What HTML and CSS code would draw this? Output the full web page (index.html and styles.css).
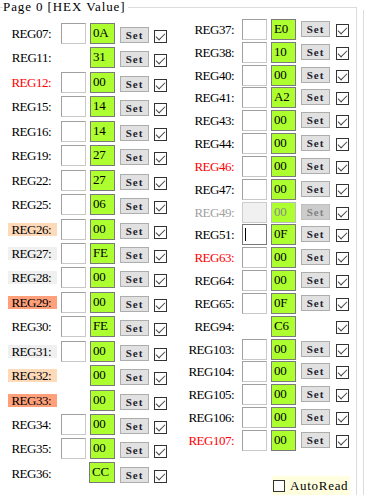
FILE: index.html
```html
<!DOCTYPE html>
<html>
<head>
<meta charset="utf-8">
<link rel="stylesheet" href="styles.css">
</head>
<body>
<div class="page">
  <fieldset class="group">
    <legend class="group-title">Page 0 [HEX Value]</legend>
    <div class="cols">
      <div class="col col-left">
        <div class="row"><span class="lbl">REG07:</span><span class="inp"></span><span class="hex">0A</span><span class="set">Set</span><span class="cb"></span></div>
        <div class="row"><span class="lbl">REG11:</span><span class="hex">31</span><span class="set">Set</span><span class="cb"></span></div>
        <div class="row"><span class="lbl red">REG12:</span><span class="inp"></span><span class="hex">00</span><span class="set">Set</span><span class="cb"></span></div>
        <div class="row"><span class="lbl">REG15:</span><span class="inp"></span><span class="hex">14</span><span class="set">Set</span><span class="cb"></span></div>
        <div class="row"><span class="lbl">REG16:</span><span class="inp"></span><span class="hex">14</span><span class="set">Set</span><span class="cb"></span></div>
        <div class="row"><span class="lbl">REG19:</span><span class="inp"></span><span class="hex">27</span><span class="set">Set</span><span class="cb"></span></div>
        <div class="row"><span class="lbl">REG22:</span><span class="inp"></span><span class="hex">27</span><span class="set">Set</span><span class="cb"></span></div>
        <div class="row"><span class="lbl">REG25:</span><span class="inp"></span><span class="hex">06</span><span class="set">Set</span><span class="cb"></span></div>
        <div class="row"><span class="lbl bg-peach">REG26:</span><span class="inp"></span><span class="hex">00</span><span class="set">Set</span><span class="cb"></span></div>
        <div class="row"><span class="lbl bg-gray">REG27:</span><span class="inp"></span><span class="hex">FE</span><span class="set">Set</span><span class="cb"></span></div>
        <div class="row"><span class="lbl bg-gray">REG28:</span><span class="inp"></span><span class="hex">00</span><span class="set">Set</span><span class="cb"></span></div>
        <div class="row"><span class="lbl bg-salmon">REG29:</span><span class="inp"></span><span class="hex">00</span><span class="set">Set</span><span class="cb"></span></div>
        <div class="row"><span class="lbl">REG30:</span><span class="inp"></span><span class="hex">FE</span><span class="set">Set</span><span class="cb"></span></div>
        <div class="row"><span class="lbl bg-gray">REG31:</span><span class="inp"></span><span class="hex">00</span><span class="set">Set</span><span class="cb"></span></div>
        <div class="row"><span class="lbl bg-peach">REG32:</span><span class="hex">00</span><span class="set">Set</span><span class="cb"></span></div>
        <div class="row"><span class="lbl bg-salmon">REG33:</span><span class="hex">00</span><span class="set">Set</span><span class="cb"></span></div>
        <div class="row"><span class="lbl">REG34:</span><span class="inp"></span><span class="hex">00</span><span class="set">Set</span><span class="cb"></span></div>
        <div class="row"><span class="lbl">REG35:</span><span class="inp"></span><span class="hex">00</span><span class="set">Set</span><span class="cb"></span></div>
        <div class="row row-last"><span class="lbl">REG36:</span><span class="hex hex-shift">CC</span><span class="set">Set</span><span class="cb"></span></div>
      </div>
      <div class="col col-right">
        <div class="row"><span class="lbl">REG37:</span><span class="inp"></span><span class="hex">E0</span><span class="set">Set</span><span class="cb"></span></div>
        <div class="row"><span class="lbl">REG38:</span><span class="inp"></span><span class="hex">10</span><span class="set">Set</span><span class="cb"></span></div>
        <div class="row"><span class="lbl">REG40:</span><span class="inp"></span><span class="hex">00</span><span class="set">Set</span><span class="cb"></span></div>
        <div class="row"><span class="lbl">REG41:</span><span class="inp"></span><span class="hex">A2</span><span class="set">Set</span><span class="cb"></span></div>
        <div class="row"><span class="lbl">REG43:</span><span class="inp"></span><span class="hex">00</span><span class="set">Set</span><span class="cb"></span></div>
        <div class="row"><span class="lbl">REG44:</span><span class="inp"></span><span class="hex">00</span><span class="set">Set</span><span class="cb"></span></div>
        <div class="row"><span class="lbl red">REG46:</span><span class="inp"></span><span class="hex">00</span><span class="set">Set</span><span class="cb"></span></div>
        <div class="row"><span class="lbl">REG47:</span><span class="inp"></span><span class="hex">00</span><span class="set">Set</span><span class="cb"></span></div>
        <div class="row disabled"><span class="lbl">REG49:</span><span class="inp"></span><span class="hex">00</span><span class="set">Set</span><span class="cb"></span></div>
        <div class="row"><span class="lbl">REG51:</span><span class="inp focused"><span class="caret"></span></span><span class="hex">0F</span><span class="set">Set</span><span class="cb"></span></div>
        <div class="row"><span class="lbl red">REG63:</span><span class="inp"></span><span class="hex">00</span><span class="set">Set</span><span class="cb"></span></div>
        <div class="row"><span class="lbl">REG64:</span><span class="inp"></span><span class="hex">00</span><span class="set">Set</span><span class="cb"></span></div>
        <div class="row"><span class="lbl">REG65:</span><span class="inp"></span><span class="hex">0F</span><span class="set">Set</span><span class="cb"></span></div>
        <div class="row"><span class="lbl">REG94:</span><span class="hex">C6</span><span class="cb"></span></div>
        <div class="row"><span class="lbl">REG103:</span><span class="inp"></span><span class="hex">00</span><span class="set">Set</span><span class="cb"></span></div>
        <div class="row"><span class="lbl">REG104:</span><span class="inp"></span><span class="hex">00</span><span class="set">Set</span><span class="cb"></span></div>
        <div class="row"><span class="lbl">REG105:</span><span class="inp"></span><span class="hex">00</span><span class="set">Set</span><span class="cb"></span></div>
        <div class="row"><span class="lbl">REG106:</span><span class="inp"></span><span class="hex">00</span><span class="set">Set</span><span class="cb"></span></div>
        <div class="row"><span class="lbl red">REG107:</span><span class="inp"></span><span class="hex">00</span><span class="set">Set</span><span class="cb"></span></div>
        <div class="autoread"><span class="cb-plain"></span><span class="autoread-text">AutoRead</span></div>
      </div>
    </div>
  </fieldset>
  <div class="side-panel"></div>
</div>
</body>
</html>
```

FILE: styles.css
```css
* { box-sizing: border-box; }
html, body { margin: 0; padding: 0; background: #ffffff; }
body {
  width: 367px;
  height: 495px;
  overflow: hidden;
  font-family: "Liberation Serif", "Times New Roman", serif;
  font-size: 13px;
  color: #000;
}
.page { display: flex; align-items: flex-start; height: 495px; overflow: hidden; }
.group {
  flex: none;
  margin: 0 0 0 -1px;
  padding: 0;
  width: 358px;
  height: 496px;
  min-width: 0;
  overflow: hidden;
  border: 1px solid #dcdcdc;
  border-bottom: none;
}
.group-title {
  margin-left: 3px;
  padding: 0 3px 0 0;
  font-size: 13px;
  line-height: 14px;
  letter-spacing: 0.9px;
  color: #000;
}
.side-panel {
  flex: none;
  margin-left: 6px;
  margin-top: 10px;
  width: 4px;
  height: 485px;
  border-left: 1px solid #dcdcdc;
}
.cols { display: flex; align-items: flex-start; }
.col { display: flex; flex-direction: column; }
.col-left { margin-left: 8px; padding-top: 9px; }
.col-right { margin-left: 18px; padding-top: 5px; }
.row { display: grid; align-items: start; }
.col-left .row {
  height: 24.44px;
  grid-template-columns: 49px 4px 25px 4px 25px 5px 29px 5px 13px;
}
.col-left .row-last { height: 21px; }
.col-right .row {
  height: 22.83px;
  grid-template-columns: 49px 8px 25px 4px 25px 5px 29px 6px 13px;
}
.lbl {
  grid-column: 1;
  grid-row: 1;
  height: 13px;
  margin-top: 4px;
  line-height: 13px;
  text-align: right;
  white-space: nowrap;
  letter-spacing: -0.5px;
}
.col-left .lbl { padding-right: 6px; }
.col-right .lbl { padding-right: 0; }
.red { color: #ff0000; }
.bg-peach { background: #ffdab9; }
.bg-gray { background: #f0f0f0; }
.bg-salmon { background: #ffa07a; }
.inp {
  grid-column: 3;
  grid-row: 1;
  height: 21px;
  background: #fff;
  border: 1px solid #a0a0a0;
  border-bottom-color: #c8c8c8;
  border-right-color: #c8c8c8;
}
.inp.focused { border-color: #7a7a7a; padding: 3px 0 0 2px; }
.caret { display: block; width: 1px; height: 13px; background: #000; }
.hex {
  grid-column: 5;
  grid-row: 1;
  height: 21px;
  background: #adff2f;
  border: 1px solid #7a7a7a;
  padding: 1px 0 0 2px;
  line-height: 16px;
  letter-spacing: -0.2px;
}
.hex-shift { margin-left: -1px; margin-top: -1px; }
.set {
  grid-column: 7;
  grid-row: 1;
  height: 16px;
  background: #e1e1e1;
  border: 1px solid #adadad;
  font-family: "Liberation Serif", serif;
  font-weight: bold;
  font-size: 11px;
  letter-spacing: 1px;
  line-height: 14px;
  text-align: center;
  color: #1e1e2e;
}
.col-left .set { margin-top: 4px; }
.col-right .set { margin-top: 2px; }
.cb {
  grid-column: 9;
  grid-row: 1;
  position: relative;
  width: 13px;
  height: 13px;
  background: #fff;
  border: 1px solid #333;
}
.col-left .cb { margin-top: 7px; }
.col-right .cb { margin-top: 5px; }
.cb::after {
  content: "";
  position: absolute;
  left: 3px;
  top: 0px;
  width: 4px;
  height: 8px;
  border-right: 1px solid #444;
  border-bottom: 1px solid #444;
  transform: rotate(45deg);
}
.disabled .lbl { color: #a0a0a0; }
.disabled .inp { background: #f0f0f0; border-color: #cccccc; }
.disabled .hex { color: #8a8a8a; border-color: #bcbcbc; }
.disabled .set { background: #cccccc; border-color: #bfbfbf; color: #838383; }
.autoread {
  display: flex;
  align-items: center;
  margin-top: 23px;
  margin-left: 87px;
  width: 78px;
  height: 19px;
  padding-left: 1px;
  background: #ffffe0;
}
.cb-plain {
  width: 12px;
  height: 12px;
  border: 1px solid #333;
  background: #fff;
  margin-top: 2px;
}
.autoread-text {
  margin-left: 5px;
  letter-spacing: 0.7px;
  line-height: 14px;
  margin-top: 2px;
}
```
